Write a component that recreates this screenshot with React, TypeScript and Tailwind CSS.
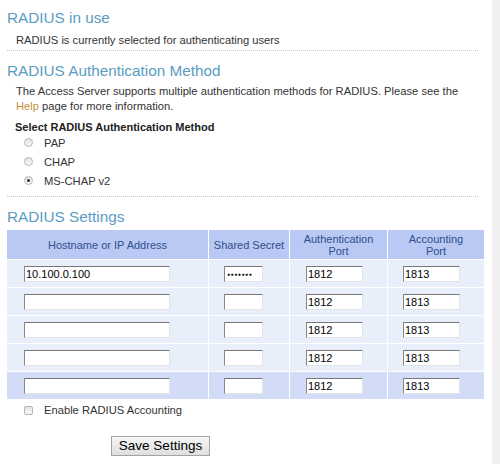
import React from "react";

const font = { fontFamily: '"Liberation Sans", Arial, sans-serif' };

function Radio({ checked }: { checked?: boolean }) {
  return (
    <span className="relative inline-flex h-[9px] w-[9px] items-center justify-center rounded-full border border-[#b5b5b5] bg-gradient-to-b from-[#e2e2e2] to-[#fafafa]">
      {checked && <span className="h-[3px] w-[3px] rounded-full bg-[#333]" />}
    </span>
  );
}

function Input({ w, value, secret }: { w: string; value?: string; secret?: boolean }) {
  return (
    <div
      className={`${w} flex h-[16px] items-center border border-t-[#777] border-l-[#888] border-b-[#e4e4e4] border-r-[#e4e4e4] bg-white pl-[1px] text-[11px] leading-[14px] text-black`}
    >
      {secret ? (
        <span className="pl-[1px] text-[5px] leading-[6px] tracking-[0.6px]">●●●●●●●</span>
      ) : (
        value
      )}
    </div>
  );
}

const rows = [
  { host: "10.100.0.100", secret: true },
  { host: "", secret: false },
  { host: "", secret: false },
  { host: "", secret: false },
  { host: "", secret: false },
];

export default function App() {
  return (
    <div className="flex h-[464px] w-[500px] bg-white text-[#333]" style={font}>
      <div className="w-[492px] pl-[7px] pr-[14px]">
        <h1 className="mt-[9px] text-[15.3px] leading-[18px] font-normal text-[#5a9cc2]">RADIUS in use</h1>
        <p className="mt-[6px] pl-[9px] text-[11.2px] leading-[14px]">RADIUS is currently selected for authenticating users</p>
        <div className="mt-[3px] border-t border-dotted border-[#c4c4c4]" />

        <h2 className="mt-[11px] text-[15.3px] leading-[18px] font-normal text-[#5a9cc2]">RADIUS Authentication Method</h2>
        <p className="mt-[4px] pl-[9px] text-[11.2px] leading-[15px]">
          The Access Server supports multiple authentication methods for RADIUS. Please see the{" "}
          <span className="text-[#c9913c]">Help</span> page for more information.
        </p>

        <div className="mt-[7px] pl-[8px] text-[11px] leading-[12px] font-bold text-[#222]">Select RADIUS Authentication Method</div>
        <div className="flex flex-col">
          {[
            { l: "PAP", c: false },
            { l: "CHAP", c: false },
            { l: "MS-CHAP v2", c: true },
          ].map((r) => (
            <div key={r.l} className="flex h-[19px] items-center text-[11.2px] leading-[14px]">
              <span className="ml-[17px] flex w-[20px]">
                <Radio checked={r.c} />
              </span>
              <span>{r.l}</span>
            </div>
          ))}
        </div>
        <div className="mt-[6px] border-t border-dotted border-[#c4c4c4]" />

        <h2 className="mt-[11px] text-[15.3px] leading-[18px] font-normal text-[#5a9cc2]">RADIUS Settings</h2>

        <div className="mt-[4px] grid w-[477px] grid-cols-[201px_80px_97px_96px] gap-[1px] bg-white text-[11px]">
          <div className="flex h-[29px] items-center justify-center bg-[#bac9f3] text-center leading-[12px] text-[#2f4f8d]">Hostname or IP Address</div>
          <div className="flex h-[29px] items-center justify-center bg-[#bac9f3] text-center leading-[12px] text-[#2f4f8d]">Shared Secret</div>
          <div className="flex h-[29px] items-center justify-center bg-[#bac9f3] text-center leading-[12px] text-[#2f4f8d]">Authentication<br />Port</div>
          <div className="flex h-[29px] items-center justify-center bg-[#bac9f3] text-center leading-[12px] text-[#2f4f8d]">Accounting<br />Port</div>
          {rows.map((r, i) => {
            const bg = i === 4 ? "bg-[#d2dcf7]" : "bg-[#e9eefb]";
            return (
              <React.Fragment key={i}>
                <div className={`flex h-[27px] items-center pl-[17px] ${bg}`}>
                  <Input w="w-[146px]" value={r.host} />
                </div>
                <div className={`flex h-[27px] items-center pl-[15px] ${bg}`}>
                  <Input w="w-[39px]" secret={r.secret} />
                </div>
                <div className={`flex h-[27px] items-center pl-[16px] ${bg}`}>
                  <Input w="w-[57px]" value="1812" />
                </div>
                <div className={`flex h-[27px] items-center pl-[15px] ${bg}`}>
                  <Input w="w-[57px]" value="1813" />
                </div>
              </React.Fragment>
            );
          })}
        </div>

        <div className="mt-[4px] flex h-[14px] items-center text-[11.2px] leading-[14px]">
          <span className="ml-[17px] flex w-[20px]">
            <span className="h-[9px] w-[9px] rounded-[2px] border border-[#b5b5b5] bg-gradient-to-b from-[#e2e2e2] to-[#fafafa]" />
          </span>
          <span>Enable RADIUS Accounting</span>
        </div>

        <div className="mt-[19px] pl-[104px]">
          <button className="flex h-[20px] w-[99px] items-center justify-center border border-[#a3a3a3] bg-gradient-to-b from-[#f7f7f7] to-[#dedede] text-[13.5px] leading-[16px] text-black">
            Save Settings
          </button>
        </div>
      </div>
      <div className="flex-1 bg-[#efefef]" />
    </div>
  );
}
